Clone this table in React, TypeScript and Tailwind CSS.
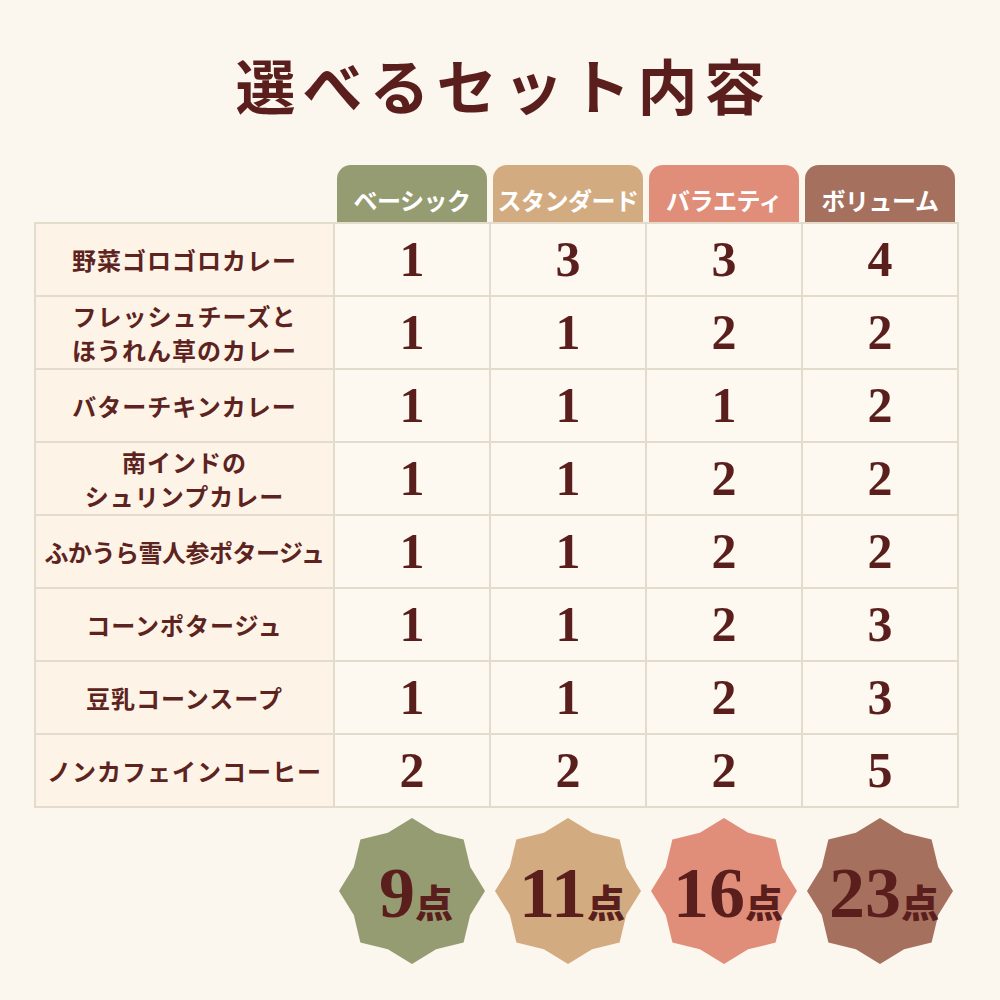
import React from "react";

const plans = [
  { name: "ベーシック", color: "bg-[#969c72]", fill: "#969c72", total: "9" },
  { name: "スタンダード", color: "bg-[#d3ab81]", fill: "#d3ab81", total: "11" },
  { name: "バラエティ", color: "bg-[#e08e79]", fill: "#e08e79", total: "16" },
  { name: "ボリューム", color: "bg-[#a6705f]", fill: "#a6705f", total: "23" },
];

const rows = [
  { label: ["野菜ゴロゴロカレー"], counts: [1, 3, 3, 4] },
  { label: ["フレッシュチーズと", "ほうれん草のカレー"], counts: [1, 1, 2, 2] },
  { label: ["バターチキンカレー"], counts: [1, 1, 1, 2] },
  { label: ["南インドの", "シュリンプカレー"], counts: [1, 1, 2, 2] },
  { label: ["ふかうら雪人参ポタージュ"], counts: [1, 1, 2, 2], tight: true },
  { label: ["コーンポタージュ"], counts: [1, 1, 2, 3] },
  { label: ["豆乳コーンスープ"], counts: [1, 1, 2, 3] },
  { label: ["ノンカフェインコーヒー"], counts: [2, 2, 2, 5] },
];

const sans = "font-['Noto_Sans_CJK_JP','Noto_Sans',sans-serif]";
const serif = "font-['Liberation_Serif','DejaVu_Serif',serif]";
const cols = "grid grid-cols-[297px_repeat(4,154px)] gap-[2px] px-[2px]";

function Star({ fill }: { fill: string }) {
  const pts: string[] = [];
  for (let i = 0; i < 16; i++) {
    const a = (Math.PI / 8) * i - Math.PI / 2;
    const r = i % 2 === 0 ? 73 : 63;
    pts.push(`${(73 + r * Math.cos(a)).toFixed(2)},${(73 + r * Math.sin(a)).toFixed(2)}`);
  }
  return (
    <svg width="146" height="146" viewBox="0 0 146 146" className="absolute inset-0">
      <polygon points={pts.join(" ")} fill={fill} />
    </svg>
  );
}

export default function App() {
  return (
    <div className="w-[1000px] h-[1000px] bg-[#fbf6ee] text-[#5a1f1c] flex flex-col items-center">
      <h1 className={`${sans} mt-[54px] h-[60px] leading-[60px] text-[60px] font-bold tracking-[7px] pl-[7px]`}>
        選べるセット内容
      </h1>

      <div className="mt-[51px] w-[925px] self-start ml-[34px]">
        <div className={cols}>
          <div />
          {plans.map((p) => (
            <div
              key={p.name}
              className={`${p.color} ${sans} mx-[2px] h-[57px] rounded-t-[14px] flex items-center justify-center pt-[12px] text-white text-[24px] font-bold tracking-[-0.5px] whitespace-nowrap`}
            >
              {p.name}
            </div>
          ))}
        </div>

        <div className={`${cols} py-[2px] bg-[#e3dccd]`}>
          {rows.map((r, i) => (
            <React.Fragment key={i}>
              <div
                className={`${sans} h-[71px] bg-[#fdf3e6] flex flex-col items-center justify-center text-[24px] leading-[34px] font-bold ${
                  r.tight ? "tracking-[-0.5px]" : "tracking-[1px]"
                } text-[#5c2320] whitespace-nowrap`}
              >
                {r.label.map((l) => (
                  <span key={l}>{l}</span>
                ))}
              </div>
              {r.counts.map((c, j) => (
                <div
                  key={j}
                  className={`${serif} h-[71px] bg-[#fdf9f1] flex items-center justify-center text-[50px] font-bold text-[#5a1f1c]`}
                >
                  {c}
                </div>
              ))}
            </React.Fragment>
          ))}
        </div>

        <div className={`${cols} mt-[10px]`}>
          <div />
          {plans.map((p) => (
            <div key={p.name} className="flex justify-center">
              <div className="relative w-[146px] h-[146px] flex items-center justify-center">
                <Star fill={p.fill} />
                <div className="relative flex items-baseline pl-[8px] pt-[4px]">
                  <span className={`${serif} text-[72px] leading-none font-bold`}>{p.total}</span>
                  <span className={`${sans} text-[38px] leading-none font-black`}>点</span>
                </div>
              </div>
            </div>
          ))}
        </div>
      </div>
    </div>
  );
}
